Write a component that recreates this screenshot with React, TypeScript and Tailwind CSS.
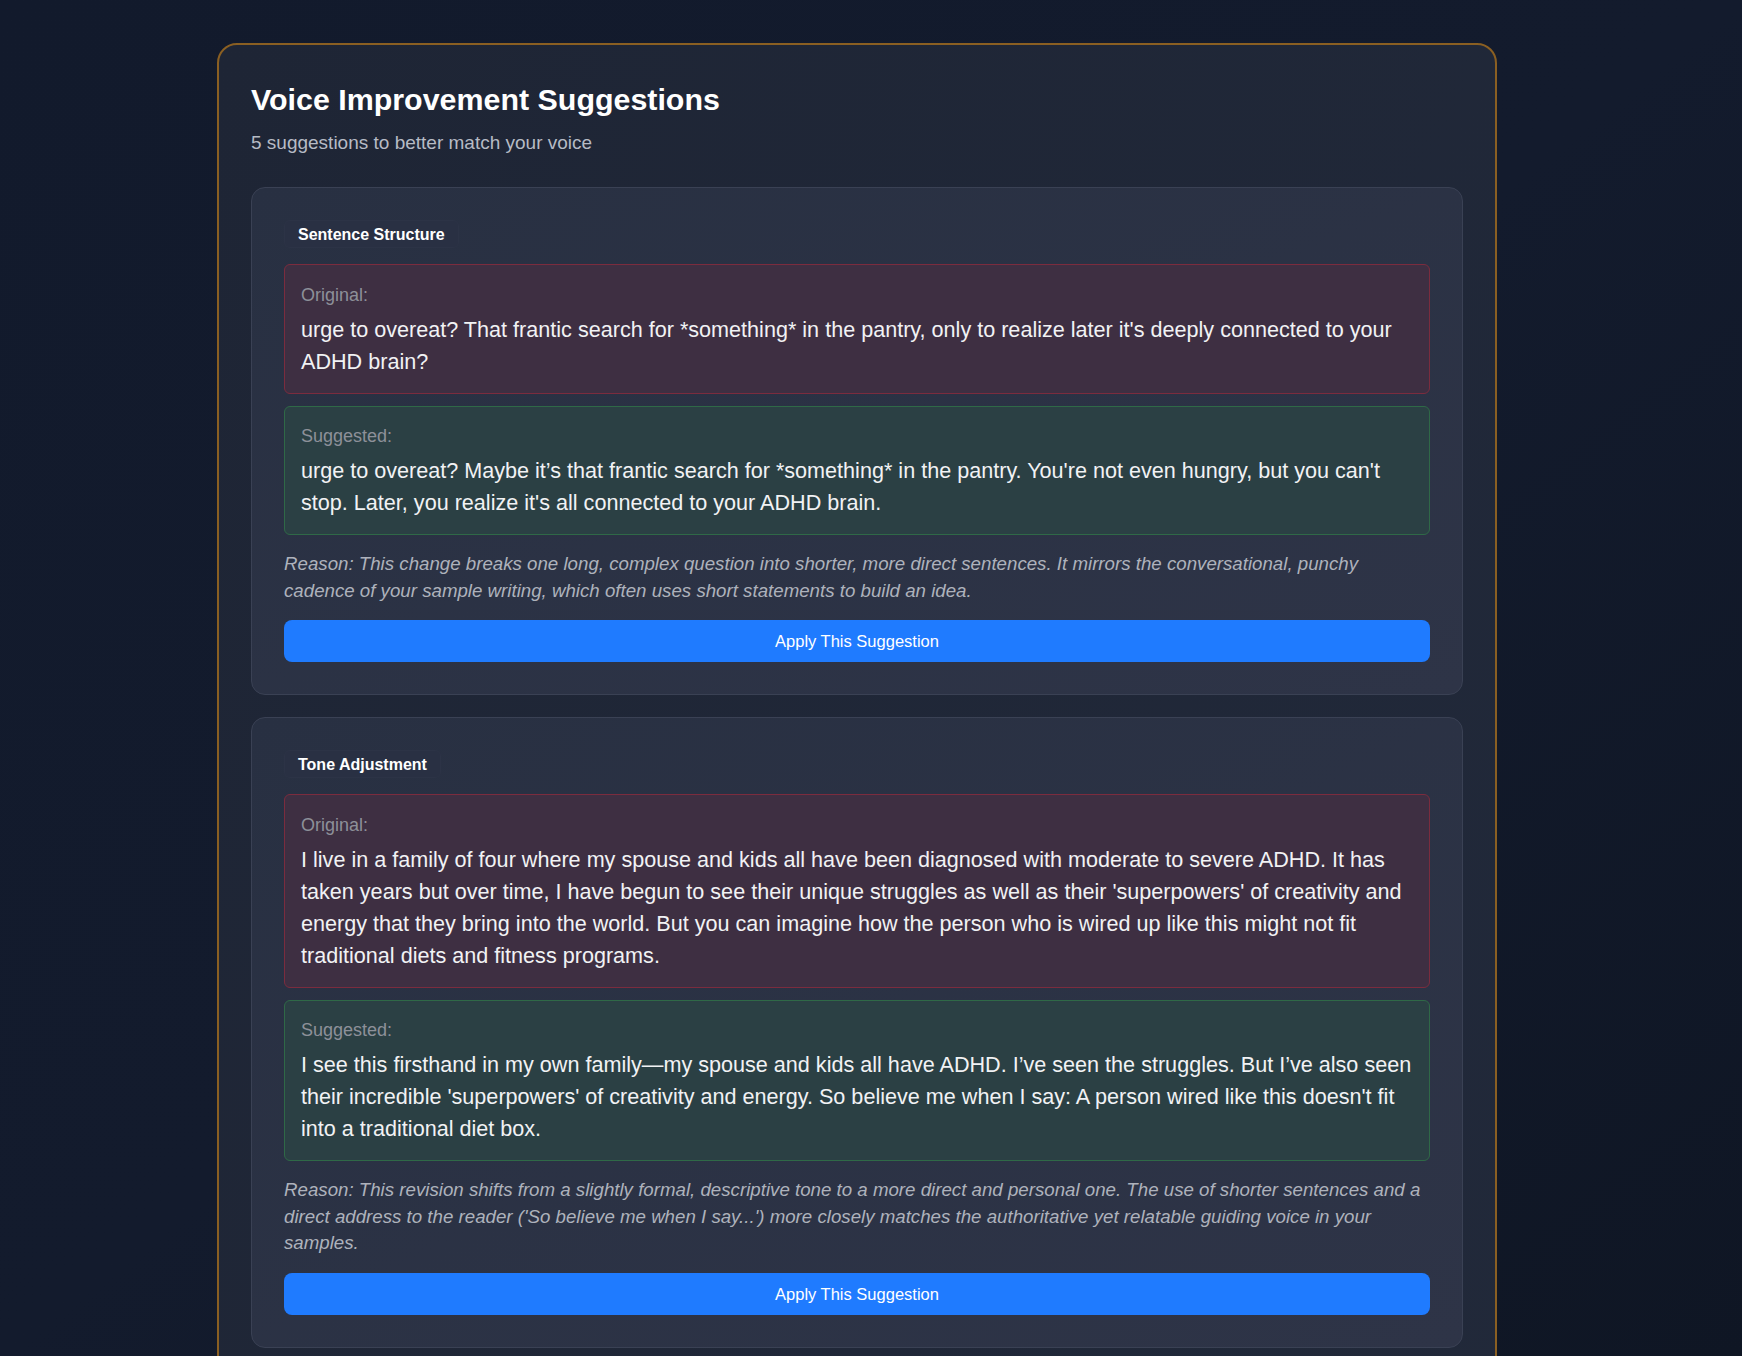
import React from "react";

type Suggestion = {
  type: string;
  original: string;
  suggested: string;
  reason: string;
};

const suggestions: Suggestion[] = [
  {
    type: "Sentence Structure",
    original:
      "urge to overeat? That frantic search for *something* in the pantry, only to realize later it's deeply connected to your ADHD brain?",
    suggested:
      "urge to overeat? Maybe it\u2019s that frantic search for *something* in the pantry. You're not even hungry, but you can't stop. Later, you realize it's all connected to your ADHD brain.",
    reason:
      "This change breaks one long, complex question into shorter, more direct sentences. It mirrors the conversational, punchy cadence of your sample writing, which often uses short statements to build an idea.",
  },
  {
    type: "Tone Adjustment",
    original:
      "I live in a family of four where my spouse and kids all have been diagnosed with moderate to severe ADHD. It has taken years but over time, I have begun to see their unique struggles as well as their 'superpowers' of creativity and energy that they bring into the world. But you can imagine how the person who is wired up like this might not fit traditional diets and fitness programs.",
    suggested:
      "I see this firsthand in my own family\u2014my spouse and kids all have ADHD. I\u2019ve seen the struggles. But I\u2019ve also seen their incredible 'superpowers' of creativity and energy. So believe me when I say: A person wired like this doesn't fit into a traditional diet box.",
    reason:
      "This revision shifts from a slightly formal, descriptive tone to a more direct and personal one. The use of shorter sentences and a direct address to the reader ('So believe me when I say...') more closely matches the authoritative yet relatable guiding voice in your samples.",
  },
  {
    type: "Word Choice",
    original:
      "These strategies can be helpful for managing impulsive eating patterns.",
    suggested:
      "These strategies actually work for taming those impulsive eating moments.",
    reason:
      "Your samples favor plain, energetic verbs over clinical phrasing.",
  },
  {
    type: "Personal Voice",
    original: "Many people find that structure helps.",
    suggested: "I've found that a little structure goes a long way.",
    reason: "First-person framing matches the way you share experience.",
  },
  {
    type: "Rhythm",
    original: "It is important to remember that progress is not linear.",
    suggested: "Remember: progress isn't a straight line.",
    reason: "Shorter phrasing keeps the punchy cadence of your writing.",
  },
];

function Card({ s }: { s: Suggestion }) {
  return (
    <div className="rounded-[14px] border border-[#3a4154] bg-gradient-to-br from-[#283042] to-[#2e3447] p-8">
      <div className="mb-4 inline-block rounded-md border border-[#2c3346] bg-[#293043] px-[13px] pb-0 pt-[2px] text-[16px] font-bold leading-[24px] text-white">
        {s.type}
      </div>
      <div className="mb-3 rounded-md border border-[#7b2c3e] bg-[#3e2f42] px-4 pb-[15px] pt-[17px]">
        <div className="mb-[5px] text-[18px] leading-[27px] text-[#8d9099]">
          Original:
        </div>
        <div className="text-[21.6px] leading-[32px] text-[#f1f2f4]">
          {s.original}
        </div>
      </div>
      <div className="rounded-md border border-[#2f6947] bg-[#2b4044] px-4 pb-[15px] pt-[16px]">
        <div className="mb-[5px] text-[18px] leading-[27px] text-[#8d9099]">
          Suggested:
        </div>
        <div className="text-[21.6px] leading-[32px] text-[#f1f2f4]">
          {s.suggested}
        </div>
      </div>
      <p className="mt-4 text-[18.7px] italic leading-[26.6px] text-[#aeb2bc]">
        Reason: {s.reason}
      </p>
      <button className="mt-4 w-full rounded-lg bg-[#1f7bff] py-2 text-[16.5px] leading-[26px] text-white">
        Apply This Suggestion
      </button>
    </div>
  );
}

export default function App() {
  return (
    <div
      className="h-[1356px] overflow-hidden bg-gradient-to-br from-[#121a2c] via-[#131b2d] to-[#0f1624] pt-[43px]"
      style={{ fontFamily: '"Liberation Sans", Arial, Helvetica, sans-serif' }}
    >
      <div className="ml-[217px] w-[1280px] rounded-[20px] border-2 border-[#8a5f22] bg-gradient-to-br from-[#1e2535] to-[#222a3b] p-8">
        <h2 className="mb-[8px] text-[30.4px] font-bold leading-[44px] text-white">
          Voice Improvement Suggestions
        </h2>
        <p className="mb-[30px] text-[19px] leading-[28px] text-[#b6bbc5]">
          5 suggestions to better match your voice
        </p>
        <div className="flex flex-col gap-[22px]">
          {suggestions.map((s, i) => (
            <Card key={i} s={s} />
          ))}
        </div>
      </div>
    </div>
  );
}
